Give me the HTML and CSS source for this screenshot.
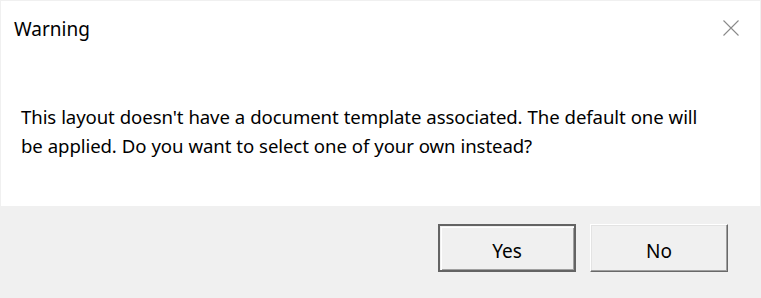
FILE: index.html
```html
<!DOCTYPE html>
<html lang="en">
<head>
<meta charset="utf-8">
<title>Warning</title>
<link rel="stylesheet" href="styles.css">
</head>
<body>
<div class="dialog">
  <div class="panel">
    <div class="titlebar">
      <span class="title">Warning</span>
      <span class="close" aria-label="Close">
        <svg width="16" height="16" viewBox="0 0 16 16"><path d="M0.5 0.5 L15.5 15.5 M15.5 0.5 L0.5 15.5" stroke="#8a8a8a" stroke-width="1.1" fill="none"/></svg>
      </span>
    </div>
    <p class="message">This layout doesn't have a document template associated. The default one will<br>be applied. Do you want to select one of your own instead?</p>
  </div>
  <div class="footer">
    <button class="btn btn-default">Yes</button>
    <button class="btn">No</button>
  </div>
</div>
</body>
</html>
```
FILE: styles.css
```css
html, body {
  margin: 0;
  padding: 0;
}
body {
  background: #f0f0f0;
  width: 761px;
  height: 298px;
  overflow: hidden;
  font-family: "Noto Sans", "Open Sans", sans-serif;
  color: #000;
}
.dialog {
  display: flex;
  flex-direction: column;
  height: 298px;
}
.panel {
  background: #fff;
  margin: 1px 1px 0 1px;
  height: 205px;
  display: flex;
  flex-direction: column;
}
.titlebar {
  display: flex;
  justify-content: space-between;
  align-items: center;
  height: 56px;
  padding: 0 21px 0 13px;
}
.title {
  font-size: 19px;
}
.close {
  display: flex;
  width: 16px;
  height: 16px;
  margin-top: -2px;
}
.message {
  margin: 0;
  padding: 45px 0 0 20px;
  font-size: 18.6px;
  letter-spacing: -0.1px;
  word-spacing: 0.3px;
  line-height: 29px;
}
.footer {
  display: flex;
  justify-content: flex-end;
  gap: 14px;
  padding: 18px 33px 0 0;
}
.btn {
  width: 138px;
  height: 48px;
  background: #f0f0f0;
  font-family: "Noto Sans", "Open Sans", sans-serif;
  font-size: 19px;
  color: #000;
  padding: 5px 0 0 0;
  border-style: solid;
  border-width: 1px;
  border-color: #fff #696969 #696969 #fff;
  box-shadow: inset -1px -1px 0 #a0a0a0, inset 1px 1px 0 #e3e3e3;
}
.btn-default {
  border: 2px solid #646464;
  box-shadow: inset 1px 1px 0 #f0f0f0, inset 2px 2px 0 #fff, inset -1px -1px 0 #a0a0a0;
}
```
